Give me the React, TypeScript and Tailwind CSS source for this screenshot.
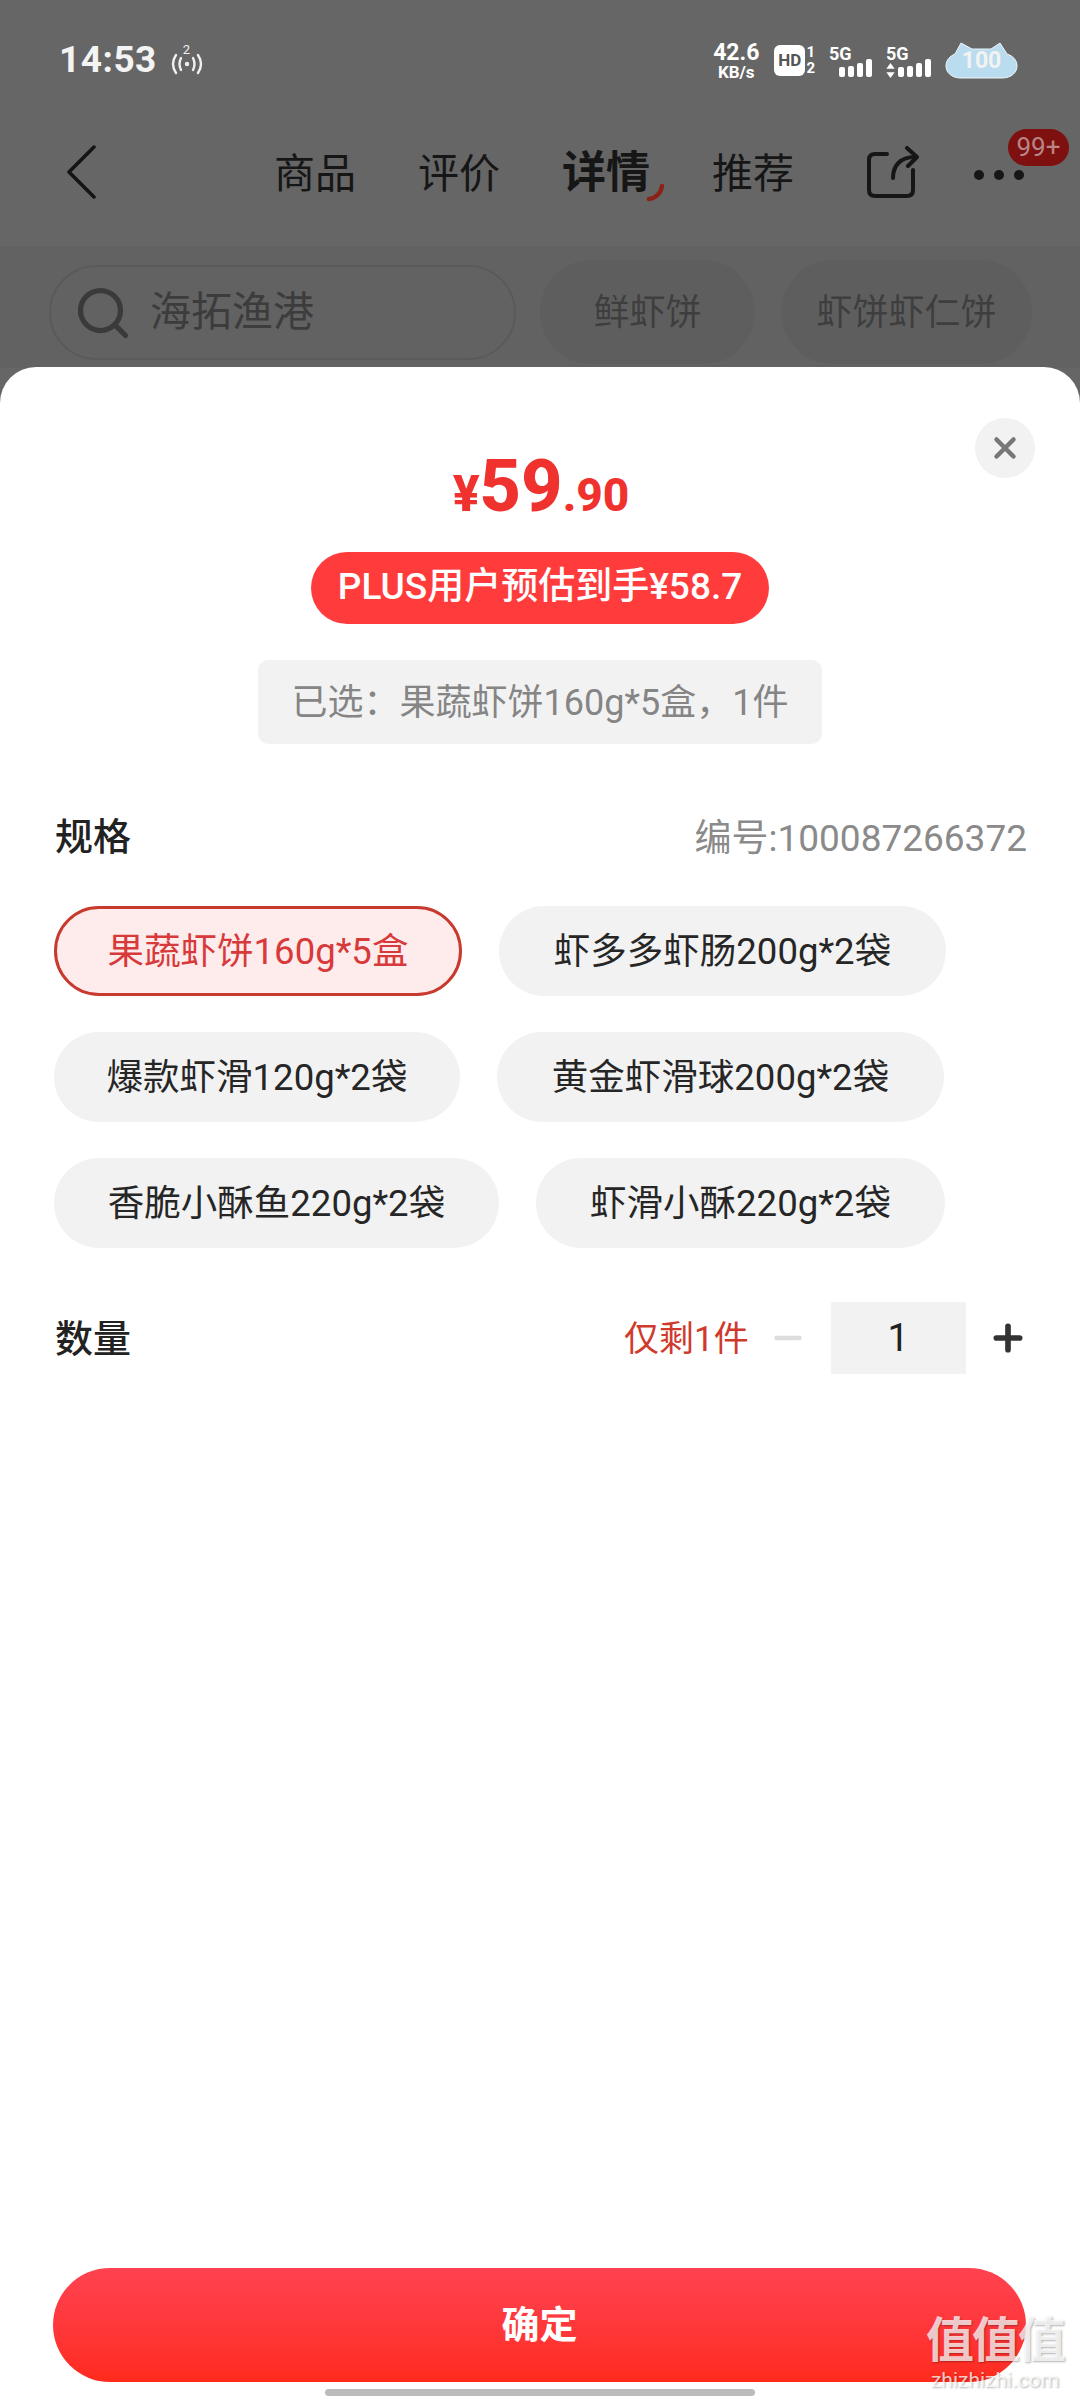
import React from 'react';
import { Search, X, Plus, Minus } from 'lucide-react';

const specRows = [
  [
    { label: '果蔬虾饼160g*5盒', width: 'w-[408px]', active: true },
    { label: '虾多多虾肠200g*2袋', width: 'w-[447px]', active: false },
  ],
  [
    { label: '爆款虾滑120g*2袋', width: 'w-[406px]', active: false },
    { label: '黄金虾滑球200g*2袋', width: 'w-[447px]', active: false },
  ],
  [
    { label: '香脆小酥鱼220g*2袋', width: 'w-[445px]', active: false },
    { label: '虾滑小酥220g*2袋', width: 'w-[409px]', active: false },
  ],
];

const SignalBars: React.FC = () => (
  <div className="flex items-end gap-[3px]">
    <span className="w-[6px] h-[10px] bg-white rounded-[2px]" />
    <span className="w-[6px] h-[11px] bg-white rounded-[2px]" />
    <span className="w-[6px] h-[14px] bg-white rounded-[2px]" />
    <span className="w-[6px] h-[18px] bg-white rounded-[2px]" />
  </div>
);

const StatusBar: React.FC = () => (
  <div className="h-[120px] flex items-start justify-between pl-[59px] pr-[62px] pt-[41px]">
    <div className="flex items-center gap-[14px] text-white">
      <span className="text-[37px] leading-[38px] font-bold tracking-[0.5px] text-[#f4f4f4]">14:53</span>
      <div className="relative w-[32px] h-[30px] mt-[2px]">
        <svg viewBox="0 0 32 30" className="w-[32px] h-[30px]" fill="none" stroke="#f0f0f0" strokeWidth="2.4" strokeLinecap="round">
          <path d="M5 9 C1 15 1 21 5 27" />
          <path d="M27 9 C31 15 31 21 27 27" />
          <path d="M10 12 C8 16 8 20 10 24" />
          <path d="M22 12 C24 16 24 20 22 24" />
          <circle cx="16" cy="18" r="2.2" fill="#f0f0f0" stroke="none" />
        </svg>
        <span className="absolute left-[12px] -top-[3px] text-[13px] leading-[14px] text-[#eeeeee]">2</span>
      </div>
    </div>
    <div className="flex items-start text-white mt-[1px]">
      <div className="flex flex-col items-center font-bold">
        <span className="text-[23px] leading-[22px]">42.6</span>
        <span className="text-[17px] leading-[16px]">KB/s</span>
      </div>
      <div className="ml-[15px] mt-[3px] w-[31px] h-[31px] bg-white rounded-[6px] flex items-center justify-center text-[#555555] text-[17px] leading-[17px] font-bold">
        HD
      </div>
      <div className="flex flex-col items-center ml-[1px] mt-[2px] font-bold text-[15px] leading-[16px]">
        <span>1</span>
        <span>2</span>
      </div>
      <div className="ml-[14px] mt-[3px] w-[46px] relative">
        <span className="block text-[18px] leading-[18px] font-bold">5G</span>
        <div className="absolute left-[10px] top-[14px]">
          <SignalBars />
        </div>
      </div>
      <div className="ml-[11px] mt-[3px] w-[46px] relative">
        <span className="block text-[18px] leading-[18px] font-bold">5G</span>
        <svg viewBox="0 0 10 18" className="absolute left-0 top-[18px] w-[9px] h-[15px]" fill="#ffffff">
          <path d="M5 0 L10 7 L0 7 Z" />
          <path d="M5 18 L10 11 L0 11 Z" />
        </svg>
        <div className="absolute left-[12px] top-[14px]">
          <SignalBars />
        </div>
      </div>
      <div className="relative ml-[13px] w-[73px] h-[37px] flex items-center justify-center">
        <svg viewBox="0 0 73 37" className="absolute inset-0 w-[73px] h-[37px]">
          <path
            d="M16 36 C6 36 1 30 1 24 C1 18 5 14 10 12 L16 1 L27 7 L46 7 L55 1 L62 12 C68 14 72 18 72 24 C72 30 67 36 57 36 Z"
            fill="#b9dcee"
            stroke="#eef6fb"
            strokeWidth="1"
          />
        </svg>
        <span className="relative text-[23px] leading-[23px] font-bold text-[#f2f2f2]">100</span>
      </div>
    </div>
  </div>
);

const NavBar: React.FC = () => (
  <div className="relative h-[126px] flex items-start pt-[32px] pl-[66px] text-[#161616]">
    <svg viewBox="0 0 30 54" className="w-[30px] h-[54px] mt-[-7px]" fill="none" stroke="#141414" strokeWidth="3.5" strokeLinecap="round" strokeLinejoin="round">
      <path d="M28 2 L3 27 L28 52" />
    </svg>
    <div className="flex items-start ml-[178px] text-[41px] leading-[44px]">
      <span>商品</span>
      <span className="ml-[62px]">评价</span>
      <span className="relative ml-[62px] mt-[-3px] text-[44px] leading-[48px] font-bold">
        详情
        <svg viewBox="0 0 20 20" className="absolute -right-[16px] top-[34px] w-[20px] h-[20px]" fill="none" stroke="#8a2218" strokeWidth="4.5" strokeLinecap="round">
          <path d="M16 3 C15 10 10 15 3 16" />
        </svg>
      </span>
      <span className="ml-[62px]">推荐</span>
    </div>
    <svg viewBox="0 0 52 54" className="absolute left-[867px] top-[26px] w-[52px] h-[54px]" fill="none" stroke="#161616" strokeWidth="4" strokeLinecap="round" strokeLinejoin="round">
      <path d="M20 8 L8 8 C4 8 2 10 2 14 L2 44 C2 48 4 50 8 50 L40 50 C44 50 46 48 46 44 L46 24" />
      <path d="M26 32 C26 20 33 11 48 11" />
      <path d="M40 2 L50 11 L41 20" />
    </svg>
    <div className="absolute left-[974px] top-[50px] flex gap-[10px]">
      <span className="w-[10px] h-[10px] rounded-full bg-[#161616]" />
      <span className="w-[10px] h-[10px] rounded-full bg-[#161616]" />
      <span className="w-[10px] h-[10px] rounded-full bg-[#161616]" />
    </div>
    <div className="absolute left-[1008px] top-[9px] w-[61px] h-[37px] rounded-full bg-[#7e1010] text-[#b98585] text-[26px] leading-[36px] text-center">
      99+
    </div>
  </div>
);

const SearchRow: React.FC = () => (
  <div className="h-[122px] bg-[#626262] flex items-start pl-[49px] pt-[14px]">
    <div className="w-[467px] h-[95px] mt-[5px] rounded-full border-2 border-[#5a5a5a] flex items-center pl-[22px] gap-[17px]">
      <Search size={60} strokeWidth={2.1} color="#3a3a3a" />
      <span className="text-[41px] text-[#3c3c3c]">海拓渔港</span>
    </div>
    <div className="ml-[24px] w-[215px] h-[104px] rounded-full bg-[#5e5e5e] flex items-center justify-center text-[36px] text-[#3e3e3e] pt-[2px]">
      鲜虾饼
    </div>
    <div className="ml-[26px] w-[251px] h-[104px] rounded-full bg-[#5e5e5e] flex items-center justify-center text-[36px] text-[#3e3e3e] pt-[2px]">
      虾饼虾仁饼
    </div>
  </div>
);

const App: React.FC = () => {
  return (
    <div className="relative w-[1080px] h-[2400px] overflow-hidden flex flex-col bg-[#666666] font-['Roboto','Noto_Sans_CJK_SC',sans-serif]">
      <StatusBar />
      <NavBar />
      <SearchRow />

      {/* Spec sheet */}
      <div className="relative flex-1 bg-white rounded-t-[36px] flex flex-col items-stretch mt-[-1px]">
        <button className="absolute left-[975px] top-[51px] w-[60px] h-[60px] rounded-full bg-[#f2f2f2] flex items-center justify-center">
          <X size={34} strokeWidth={3.2} color="#777777" />
        </button>

        <div className="flex flex-col items-center">
          <div className="flex items-baseline mt-[79px] text-[#f0322f] font-extrabold h-[82px] ml-[2px]">
            <span className="text-[50px] leading-[82px]">¥</span>
            <span className="text-[72px] leading-[82px]">59</span>
            <span className="text-[46px] leading-[82px]">.90</span>
          </div>
          <div className="mt-[24px] w-[458px] h-[72px] rounded-full bg-[#ff3b3b] flex items-center justify-center text-white text-[37px] font-medium whitespace-nowrap pb-[2px]">
            PLUS用户预估到手¥58.7
          </div>
          <div className="mt-[36px] w-[564px] h-[84px] rounded-[10px] bg-[#f2f2f2] flex items-center justify-center text-[#858585] text-[36px] whitespace-nowrap pt-[2px]">
            已选：果蔬虾饼160g*5盒，1件
          </div>
        </div>

        <div className="flex items-center justify-between pl-[55px] pr-[53px] mt-[66px] h-[54px]">
          <span className="text-[38px] font-medium text-[#222222]">规格</span>
          <span className="text-[37px] text-[#8a8a8a] mt-[3px]">编号:100087266372</span>
        </div>

        <div className="flex flex-col gap-[36px] pl-[54px] mt-[42px]">
          {specRows.map((row, i) => (
            <div key={i} className="flex gap-[37px]">
              {row.map(spec => (
                <div
                  key={spec.label}
                  className={`${spec.width} h-[90px] rounded-full flex items-center justify-center text-[36.5px] whitespace-nowrap pt-[2px] ${
                    spec.active
                      ? 'bg-[#fdeceb] border-[3px] border-[#c8392e] text-[#d8393a]'
                      : 'bg-[#f2f2f2] text-[#262626]'
                  }`}
                >
                  {spec.label}
                </div>
              ))}
            </div>
          ))}
        </div>

        <div className="flex items-center pl-[55px] mt-[54px] h-[72px]">
          <span className="text-[38px] font-medium text-[#222222] mt-[3px]">数量</span>
          <span className="ml-[493px] text-[35px] text-[#cf3a2c] mt-[5px]">仅剩1件</span>
          <Minus size={40} strokeWidth={2.6} color="#dddddd" className="ml-[19px]" />
          <div className="ml-[23px] w-[135px] h-[72px] bg-[#f2f2f2] flex items-center justify-center text-[38px] text-[#222222]">
            1
          </div>
          <Plus size={40} strokeWidth={3.4} color="#333333" className="ml-[22px]" />
        </div>

        <div className="mt-auto pl-[53px] pr-[54px] pb-[18px]">
          <button className="w-full h-[114px] rounded-full bg-gradient-to-b from-[#ff4250] to-[#ff2a1c] text-white text-[38px] font-bold">
            确定
          </button>
        </div>
        <div className="absolute left-[325px] bottom-[4px] w-[430px] h-[7px] rounded-full bg-[#bbbbbb]" />
      </div>

      {/* Watermark */}
      <div className="absolute left-[926px] top-[2316px] flex flex-col items-center text-white/75 [text-shadow:1px_1px_2px_rgba(0,0,0,0.3)]">
        <span className="text-[48px] leading-[50px] font-bold tracking-[-2px]">值值值</span>
        <span className="text-[21px] leading-[24px] mt-[2px]">zhizhizhi.com</span>
      </div>
    </div>
  );
};

export default App;
